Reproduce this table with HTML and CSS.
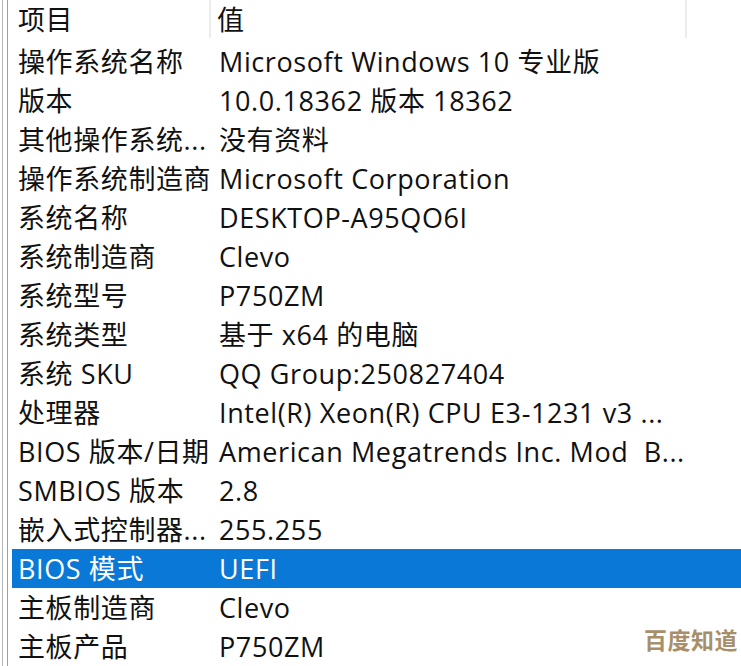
FILE: index.html
```html
<!DOCTYPE html>
<html lang="zh-CN">
<head>
<meta charset="utf-8">
<title>系统摘要</title>
<link rel="stylesheet" href="styles.css">
</head>
<body>
<div class="window">
  <div class="edge">
    <div class="list">
      <div class="row head">
        <div class="cell c1">项目</div>
        <div class="cell c2">值</div>
      </div>
      <div class="row"><div class="cell c1">操作系统名称</div><div class="cell c2">Microsoft Windows 10 专业版</div></div>
      <div class="row"><div class="cell c1">版本</div><div class="cell c2">10.0.18362 版本 18362</div></div>
      <div class="row"><div class="cell c1">其他操作系统...</div><div class="cell c2">没有资料</div></div>
      <div class="row"><div class="cell c1">操作系统制造商</div><div class="cell c2">Microsoft Corporation</div></div>
      <div class="row"><div class="cell c1">系统名称</div><div class="cell c2">DESKTOP-A95QO6I</div></div>
      <div class="row"><div class="cell c1">系统制造商</div><div class="cell c2">Clevo</div></div>
      <div class="row"><div class="cell c1">系统型号</div><div class="cell c2">P750ZM</div></div>
      <div class="row"><div class="cell c1">系统类型</div><div class="cell c2">基于 x64 的电脑</div></div>
      <div class="row"><div class="cell c1">系统 SKU</div><div class="cell c2">QQ Group:250827404</div></div>
      <div class="row"><div class="cell c1">处理器</div><div class="cell c2">Intel(R) Xeon(R) CPU E3-1231 v3 ...</div></div>
      <div class="row"><div class="cell c1">BIOS 版本/日期</div><div class="cell c2">American Megatrends Inc. Mod&nbsp; B...</div></div>
      <div class="row"><div class="cell c1">SMBIOS 版本</div><div class="cell c2">2.8</div></div>
      <div class="row"><div class="cell c1">嵌入式控制器...</div><div class="cell c2">255.255</div></div>
      <div class="row selected"><div class="cell c1">BIOS 模式</div><div class="cell c2">UEFI</div></div>
      <div class="row"><div class="cell c1">主板制造商</div><div class="cell c2">Clevo</div></div>
      <div class="row"><div class="cell c1">主板产品</div><div class="cell c2">P750ZM</div></div>
    </div>
  </div>
</div>
<div class="watermark">百度知道</div>
</body>
</html>
```

FILE: styles.css
```css
html, body {
  margin: 0;
  padding: 0;
  background: #ffffff;
}

body {
  width: 741px;
  height: 666px;
  overflow: hidden;
  position: relative;
  font-family: "Open Sans", "Noto Sans CJK SC", sans-serif;
  font-size: 27px;
  color: #111111;
}

.window {
  padding-left: 2px;
  height: 666px;
}

.edge {
  border-left: 1px solid #b4b4b4;
  padding-left: 4px;
  height: 100%;
}

.list {
  border-left: 1px solid #a0a0a0;
  padding-left: 4px;
  height: 100%;
  display: flex;
  flex-direction: column;
}

.row {
  display: grid;
  grid-template-columns: 199px 476px;
  height: 39px;
  line-height: 39px;
}

.row.head {
  height: 42px;
  line-height: 40px;
}

.cell {
  white-space: nowrap;
  overflow: hidden;
  letter-spacing: 0.6px;
}

.c1 {
  padding-left: 6px;
}

.c2 {
  padding-left: 8px;
}

.head .c1 {
  border-right: 2px solid #ececec;
  height: 38px;
}

.head .c2 {
  padding-left: 6px;
  border-right: 2px solid #ececec;
  height: 38px;
}

.selected {
  background: #0a78d7;
  color: #ffffff;
}

.watermark {
  position: absolute;
  right: 3px;
  bottom: 12px;
  font-family: "Noto Sans CJK SC", sans-serif;
  font-weight: 700;
  font-size: 23px;
  line-height: 30px;
  color: #a88f6a;
  letter-spacing: 0.5px;
}
```
